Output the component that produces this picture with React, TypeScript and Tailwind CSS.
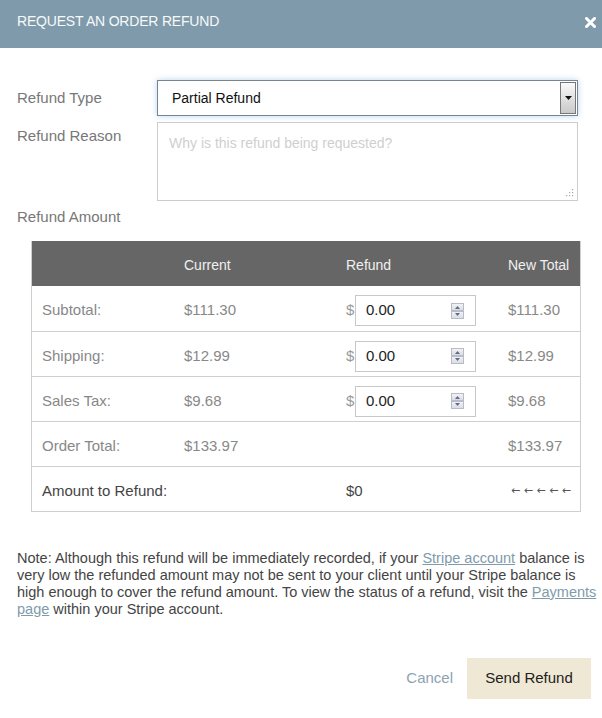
import React from "react";

const font = { fontFamily: '"Liberation Sans", Arial, sans-serif' };

function Spinner() {
  return (
    <svg width="13" height="16" viewBox="0 0 13 16" className="shrink-0">
      <defs>
        <linearGradient id="sg" x1="0" y1="0" x2="0" y2="1">
          <stop offset="0" stopColor="#f4f4f6" />
          <stop offset="1" stopColor="#d8dbe2" />
        </linearGradient>
      </defs>
      <rect x="0.5" y="0.5" width="12" height="7" fill="url(#sg)" stroke="#b9bcc6" />
      <rect x="0.5" y="8.5" width="12" height="7" fill="url(#sg)" stroke="#b9bcc6" />
      <path d="M4 6 L6.5 3 L9 6 Z" fill="#5c6a8c" />
      <path d="M4 10 L6.5 13 L9 10 Z" fill="#5c6a8c" />
    </svg>
  );
}

function RefundInput() {
  return (
    <div className="flex items-center">
      <span className="text-[15px] text-[#999] w-[9px]">$</span>
      <div className="w-[121px] h-[31px] border border-[#c8c8c8] bg-white flex items-center pl-[10px] pr-[11px] justify-between">
        <span className="text-[15px] text-[#222]">0.00</span>
        <Spinner />
      </div>
    </div>
  );
}

const rowCls = "grid grid-cols-[142px_162px_162px_84px] h-[45px] pt-[5px] items-center border-t border-[#cfcfcf] text-[15px] text-[#888]";
const firstRowCls = "grid grid-cols-[142px_162px_162px_84px] h-[45px] pt-[5px] items-center text-[15px] text-[#888]";

export default function App() {
  return (
    <div style={font} className="w-[602px] h-[718px] bg-white relative overflow-hidden">
      {/* Header */}
      <div className="h-[48px] bg-[#7f9bab] flex items-center justify-between pl-[17px] pr-[6px] pb-[6px]">
        <span className="text-[#f7f9fa] text-[14px] tracking-[-0.2px]">REQUEST AN ORDER REFUND</span>
        <svg width="11" height="11" viewBox="0 0 11 11" className="mt-[2px]">
          <path d="M1.5 1.5 L9.5 9.5 M9.5 1.5 L1.5 9.5" stroke="#fff" strokeWidth="3" strokeLinecap="square" />
        </svg>
      </div>

      {/* Form */}
      <div className="px-[17px] pt-[32px]">
        <div className="flex items-center">
          <div className="w-[140px] text-[15px] text-[#777]">Refund Type</div>
          <div className="w-[421px] h-[36px] border border-[#76858f] bg-white flex items-center justify-between shadow-[0_0_6px_rgba(100,160,220,0.45)]">
            <span className="pl-[14px] text-[14px] text-[#111]">Partial Refund</span>
            <div className="w-[16px] h-[32px] mr-[1px] border border-[#777] bg-gradient-to-b from-[#fafafa] to-[#c9c9c9] flex items-center justify-center">
              <svg width="7" height="4" viewBox="0 0 7 4">
                <path d="M0 0 L7 0 L3.5 4 Z" fill="#111" />
              </svg>
            </div>
          </div>
        </div>

        <div className="flex mt-[6px]">
          <div className="w-[140px] text-[15px] text-[#777] pt-[3px]">Refund Reason</div>
          <div className="w-[421px] h-[79px] border border-[#cccccc] relative">
            <div className="pl-[11px] pt-[10px] text-[14px] text-[#cfcfcf]">Why is this refund being requested?</div>
            <svg width="8" height="8" viewBox="0 0 8 8" className="absolute right-[3px] bottom-[3px]">
              <rect x="6" y="0" width="1.2" height="1.2" fill="#aaa" />
              <rect x="3" y="3" width="1.2" height="1.2" fill="#aaa" />
              <rect x="6" y="3" width="1.2" height="1.2" fill="#aaa" />
              <rect x="0" y="6" width="1.2" height="1.2" fill="#aaa" />
              <rect x="3" y="6" width="1.2" height="1.2" fill="#aaa" />
              <rect x="6" y="6" width="1.2" height="1.2" fill="#aaa" />
            </svg>
          </div>
        </div>

        <div className="mt-[5px] text-[15px] text-[#777]">Refund Amount</div>

        {/* Table */}
        <div className="ml-[14px] mt-[12px] w-[550px] border border-[#cfcfcf] border-t-0 overflow-hidden">
          <div className="grid grid-cols-[142px_162px_162px_84px] h-[45px] bg-[#666666] text-[14px] text-[#f0f0f0] items-end pb-[10px]">
            <span />
            <span className="pl-[10px]">Current</span>
            <span className="pl-[10px]">Refund</span>
            <span className="pl-[10px] whitespace-nowrap">New Total</span>
          </div>
          {[
            ["Subtotal:", "$111.30", "$111.30"],
            ["Shipping:", "$12.99", "$12.99"],
            ["Sales Tax:", "$9.68", "$9.68"],
          ].map(([l, c, n], i) => (
            <div key={l} className={i === 0 ? firstRowCls : rowCls}>
              <span className="pl-[10px]">{l}</span>
              <span className="pl-[10px]">{c}</span>
              <span className="pl-[10px]"><RefundInput /></span>
              <span className="pl-[10px]">{n}</span>
            </div>
          ))}
          <div className={rowCls}>
            <span className="pl-[10px]">Order Total:</span>
            <span className="pl-[10px]">$133.97</span>
            <span />
            <span className="pl-[10px]">$133.97</span>
          </div>
          <div className="grid grid-cols-[142px_162px_162px_84px] h-[45px] pt-[5px] items-center border-t border-[#cfcfcf] text-[15px] text-[#444]">
            <span className="pl-[10px] whitespace-nowrap col-span-2">Amount to Refund:</span>
            <span className="pl-[10px]">$0</span>
            <span className="pl-[13px] text-[11px] text-[#555] whitespace-nowrap overflow-hidden" style={{ fontFamily: '"DejaVu Sans", sans-serif' }}>← ← ← ← ←</span>
          </div>
        </div>

        {/* Note */}
        <p className="mt-[38px] text-[14.5px] leading-[17px] text-[#444] w-[581px]">
          Note: Although this refund will be immediately recorded, if your{" "}
          <a className="text-[#7f9bab] underline">Stripe account</a> balance is very low the refunded amount may not be sent to your client until your Stripe balance is high enough to cover the refund amount. To view the status of a refund, visit the{" "}
          <a className="text-[#7f9bab] underline">Payments page</a> within your Stripe account.
        </p>

        <div className="flex justify-end items-center mt-[40px] mr-[-6px]">
          <span className="text-[15px] text-[#8ea2b0] mr-[14px]">Cancel</span>
          <div className="w-[124px] h-[41px] bg-[#efe8d4] flex items-center justify-center text-[15px] text-[#222]">Send Refund</div>
        </div>
      </div>
    </div>
  );
}
